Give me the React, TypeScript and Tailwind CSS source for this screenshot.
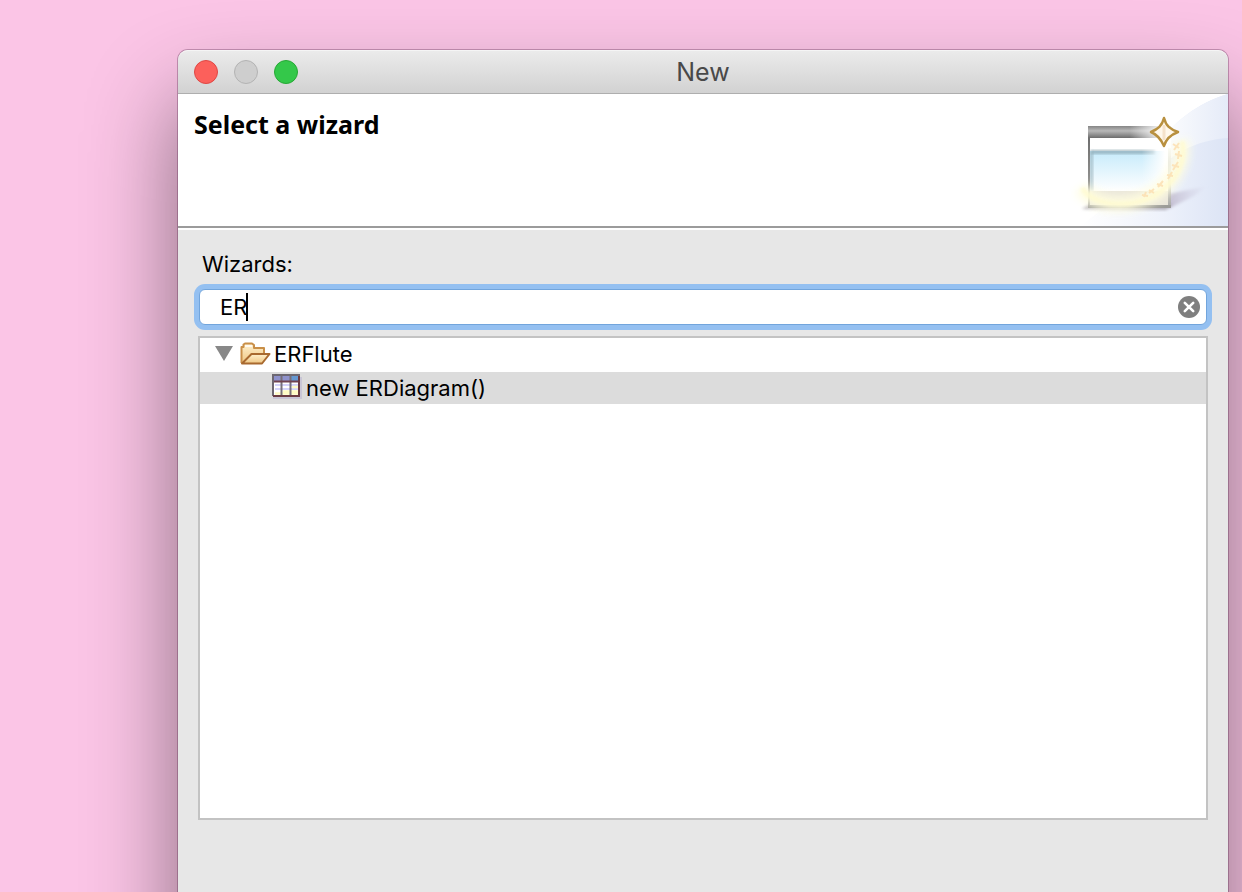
import { useState } from "react";

function WizardBanner() {
  return (
    <svg className="h-[132px] w-[168px] shrink-0" viewBox="0 0 168 132" aria-hidden="true">
      <defs>
        <linearGradient id="sweep" gradientUnits="userSpaceOnUse" x1="20" x2="168" y1="0" y2="0">
          <stop offset="0" stopColor="#fff" />
          <stop offset=".55" stopColor="#eef2fb" />
          <stop offset="1" stopColor="#dce4f5" />
        </linearGradient>
        <linearGradient id="sweepTop" gradientUnits="userSpaceOnUse" x1="96" x2="168" y1="0" y2="0">
          <stop offset="0" stopColor="#fff" />
          <stop offset="1" stopColor="#e5ebf8" />
        </linearGradient>
        <linearGradient id="bar" x1="0" x2="0" y1="0" y2="1">
          <stop offset="0" stopColor="#858585" />
          <stop offset=".4" stopColor="#b8b8b8" />
          <stop offset=".65" stopColor="#999" />
          <stop offset="1" stopColor="#6c6c6c" />
        </linearGradient>
        <linearGradient id="barFade" x1="0" x2="1" y1="0" y2="0">
          <stop offset=".5" stopColor="#fff" stopOpacity="0" />
          <stop offset=".85" stopColor="#fff" stopOpacity=".85" />
        </linearGradient>
        <linearGradient id="pane" x1="0" x2="0" y1="0" y2="1">
          <stop offset="0" stopColor="#c6ebfb" />
          <stop offset="1" stopColor="#fff" />
        </linearGradient>
        <linearGradient id="paneFade" x1="0" x2="1" y1="0" y2="0">
          <stop offset=".65" stopColor="#fff" stopOpacity="0" />
          <stop offset=".95" stopColor="#fff" />
        </linearGradient>
        <linearGradient id="frameLeft" x1="0" x2="0" y1="0" y2="1">
          <stop offset="0" stopColor="#6f6f6f" />
          <stop offset="1" stopColor="#a5a5a2" />
        </linearGradient>
        <linearGradient id="frameRight" x1="0" x2="0" y1="0" y2="1">
          <stop offset="0" stopColor="#fbfbf6" />
          <stop offset="1" stopColor="#a9a9a6" />
        </linearGradient>
        <linearGradient id="cast" x1="0" x2="1" y1="0" y2="0">
          <stop offset="0" stopColor="#b8b0c6" stopOpacity=".8" />
          <stop offset="1" stopColor="#c9c5dc" stopOpacity="0" />
        </linearGradient>
        <filter id="soft1" x="-20%" y="-20%" width="140%" height="140%">
          <feGaussianBlur stdDeviation="1.5" />
        </filter>
        <filter id="soft4" x="-30%" y="-30%" width="160%" height="160%">
          <feGaussianBlur stdDeviation="4" />
        </filter>
      </defs>
      <path d="M168 0 C138 9 112 28 96 54 C76 84 52 110 20 132 H168Z" fill="url(#sweep)" />
      <path d="M168 0 C138 9 112 28 96 54 L90 84 C110 60 136 46 168 44Z" fill="url(#sweepTop)" />
      <path d="M108 100 L148 92 L134 102 L108 115Z" fill="url(#cast)" filter="url(#soft1)" />
      <path d="M22 115 L30 110 H112 L106 116Z" fill="#8c8590" opacity=".6" filter="url(#soft1)" />
      <rect x="28" y="32" width="83" height="82" fill="#fff" />
      <rect x="28" y="32" width="83" height="12" fill="url(#bar)" />
      <rect x="28" y="32" width="83" height="12" fill="url(#barFade)" />
      <rect x="30" y="57" width="78" height="40" fill="url(#pane)" />
      <rect x="31" y="56" width="64" height="4" fill="#809da8" opacity=".7" filter="url(#soft1)" />
      <rect x="30" y="57" width="3" height="40" fill="#8fa9b3" opacity=".7" filter="url(#soft1)" />
      <rect x="31" y="53" width="78" height="44" fill="url(#paneFade)" />
      <rect x="30" y="97" width="79" height="15" fill="#e8e5da" />
      <rect x="28" y="44" width="2" height="70" fill="url(#frameLeft)" />
      <rect x="108" y="54" width="3" height="60" fill="url(#frameRight)" />
      <rect x="28" y="111" width="83" height="3" fill="#9b9b98" />
      <path d="M22 94 C34 114 76 115 100 96 C117 82 124 64 121 47" fill="none" stroke="#fffde0" strokeWidth="16" opacity=".9" filter="url(#soft4)" />
      <path d="M22 94 C34 114 76 115 100 98 C119 84 126 64 122 47" fill="none" stroke="#fffbd0" strokeWidth="5" opacity=".8" filter="url(#soft1)" />
      <g fill="none" stroke="#fbdfb2" strokeWidth="2" opacity=".85">
        <path d="M113 50l6 4m0-5l-5 7M115 60l7 2m-3-5l-1 8M112 71l7 2m-1-5l-5 8M107 81l6 1m-1-4l-4 7M97 90l6 2m0-5l-5 6M89 96l5 3m0-4l-5 4M82 101l6 1m-2-4l-2 5" />
      </g>
      <path d="M104 24 C106 32 110 35 118 38 C110 41 106 45 104 52 C101 45 98 41 91 38 C98 35 102 32 104 24Z" fill="#fff8ec" stroke="#b8903f" strokeWidth="2.500" strokeLinejoin="round" />
      <path d="M104 31V46" stroke="#f5e2ca" strokeWidth="3" />
    </svg>
  );
}

function FolderIcon() {
  return (
    <svg className="h-6 w-8 shrink-0" viewBox="0 0 32 24" aria-hidden="true">
      <defs>
        <linearGradient id="folder" x1="0" x2="0" y1="0" y2="1">
          <stop offset="0" stopColor="#fff0cd" />
          <stop offset="1" stopColor="#efc784" />
        </linearGradient>
      </defs>
      <path d="M1.500 21V5H3.500V2.500L5 1.500H12L14 3V6H24V12" fill="url(#folder)" stroke="#c98f48" strokeWidth="2" strokeLinejoin="round" />
      <path d="M5 4H12" fill="none" stroke="#fffaf0" strokeWidth="2" />
      <path d="M2 21.500L11.500 12H29.500L22 21.500Z" fill="url(#folder)" stroke="#a8692f" strokeWidth="2" strokeLinejoin="round" />
    </svg>
  );
}

function TableIcon() {
  return (
    <svg className="h-[26px] w-[30px] shrink-0" viewBox="0 0 30 26" aria-hidden="true">
      <rect x="1" y="3" width="29" height="22" fill="#b5b0d0" opacity=".5" />
      <rect x="1" y="1" width="26" height="21" fill="#fff" />
      <rect x="2" y="2" width="17" height="5" fill="#8f92cc" />
      <rect x="19" y="2" width="8" height="5" fill="#6598d2" />
      <path d="M3 11H26M3 15H26" stroke="#d3d3fb" strokeWidth="2" />
      <path d="M11 17.500H26M3 19.500H26M20 13H26" stroke="#fffbc4" strokeWidth="2.500" />
      <path d="M9.500 2V22M18.500 2V22" stroke="#77707a" strokeWidth="2" />
      <path d="M1 7.500H28" stroke="#6f4350" strokeWidth="2" />
      <path d="M1 22V1H28" fill="none" stroke="#6d6872" strokeWidth="2" />
      <path d="M27 2V22H1" fill="none" stroke="#6b3c44" strokeWidth="2" />
    </svg>
  );
}

export default function App() {
  const [filter, setFilter] = useState("ER");
  return (
    <main className="flex h-screen flex-col overflow-hidden bg-[#fbc5e6] pt-[50px] pr-[14px] pl-[178px] font-['Inter',sans-serif] text-[22px] leading-8 text-black">
      <section className="-mb-52 flex flex-1 flex-col rounded-t-[10px] bg-[#e7e7e7] shadow-[0_0_0_1px_rgba(70,20,60,0.3),0_50px_90px_rgba(0,0,0,0.46)]">
        <header className="grid h-11 shrink-0 grid-cols-[1fr_auto_1fr] items-center rounded-t-[10px] border-t border-b border-t-[#f5f5f5] border-b-[#aeaeae] bg-linear-to-b from-[#ebebeb] to-[#d2d2d2] px-4">
          <div className="flex gap-4">
            <button aria-label="Close" className="size-6 rounded-full border border-[#df4744] bg-[#fc605b]" />
            <button aria-label="Minimize" disabled className="size-6 rounded-full border border-[#b3b3b3] bg-[#cecece]" />
            <button aria-label="Zoom" className="size-6 rounded-full border border-[#27a835] bg-[#34c84a]" />
          </div>
          <h1 className="text-[25px] text-[#494949]">New</h1>
        </header>

        <div className="flex shrink-0 justify-between border-b-2 border-[#9b9b9b] bg-white pl-4">
          <h2 className="pt-3.5 font-['Noto_Sans',sans-serif] text-[25px] font-bold">Select a wizard</h2>
          <WizardBanner />
        </div>

        <div className="flex flex-1 flex-col border-t-2 border-white px-5 pt-[18px] pb-[280px]">
          <label htmlFor="filter" className="pl-1">Wizards:</label>
          <div className="relative mx-px mt-[9px] flex h-9 shrink-0 items-center rounded-[6px] border border-[#72a5dc] bg-white pr-[6px] pl-5 shadow-[0_0_0_5px_#94c0f1]">
            <input
              id="filter"
              value={filter}
              onChange={(e) => setFilter(e.target.value)}
              className="min-w-0 flex-1 bg-transparent outline-none"
            />
            {filter === "ER" && <span className="absolute top-[3px] left-[46px] h-7 w-0.5 bg-black" />}
            <button aria-label="Clear" onClick={() => setFilter("")}>
              <svg className="size-[22px]" viewBox="0 0 22 22">
                <circle cx="11" cy="11" r="11" fill="#7f7f7f" />
                <path d="M6.800 6.800L15.200 15.200M15.200 6.800L6.800 15.200" stroke="#fff" strokeWidth="2.600" strokeLinecap="round" />
              </svg>
            </button>
          </div>

          <ul role="tree" aria-label="Wizards" className="mt-[11px] flex-1 border-2 border-[#c3c3c3] bg-white">
            <li role="treeitem" aria-expanded="true">
              <div className="flex h-[34px] items-center pb-0.5 pl-[15px]">
                <svg className="mr-[7px] h-4 w-[18px] shrink-0" viewBox="0 0 18 16" aria-hidden="true">
                  <path d="M0 0H18L9 15Z" fill="#888" />
                </svg>
                <FolderIcon />
                <span className="pl-0.5">ERFlute</span>
              </div>
              <ul role="group">
                <li role="treeitem" aria-selected="true" className="flex h-8 items-start bg-[#dcdcdc] pl-[72px]">
                  <span className="pt-0.5"><TableIcon /></span>
                  <span className="pl-1">new ERDiagram()</span>
                </li>
              </ul>
            </li>
          </ul>
        </div>
      </section>
    </main>
  );
}
